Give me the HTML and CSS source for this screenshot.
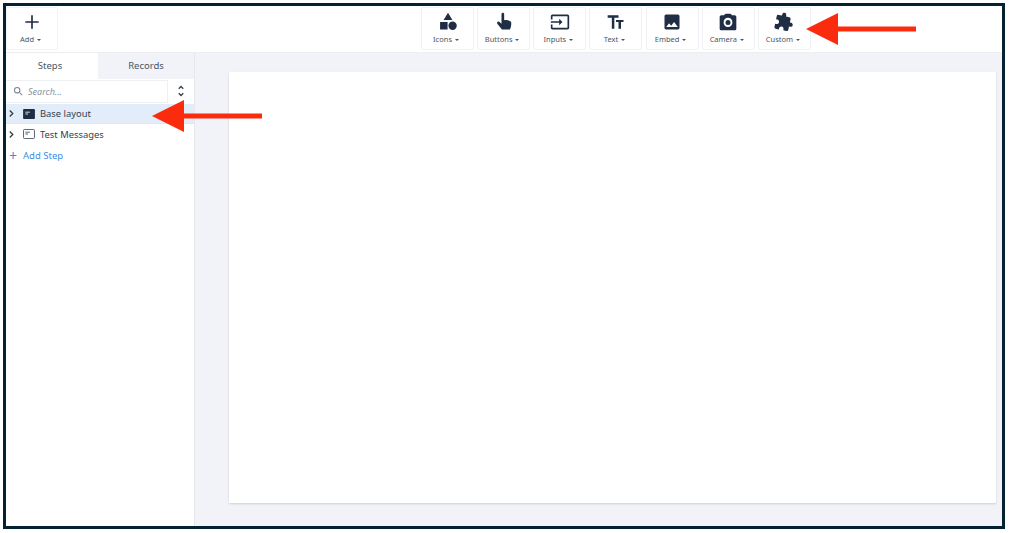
FILE: index.html
```html
<!DOCTYPE html>
<html lang="en">
<head>
    <meta charset="UTF-8">
    <meta name="viewport" content="width=device-width, initial-scale=1.0">
    <title>Steps editor</title>
    <link rel="stylesheet" href="styles.css">
</head>
<body>
    <div class="frame">
        <header class="toolbar">
            <div class="tool tool-add">
                <svg class="tool-icon" viewBox="0 0 24 24"><path d="M12 4v16M4 12h16" fill="none" stroke="#1f2d45" stroke-width="2"/></svg>
                <span class="tool-label">Add <i class="caret"></i></span>
            </div>
            <div class="tool-group">
                <div class="tool">
                    <svg class="tool-icon" viewBox="0 0 24 24"><path d="M12 1l5.300 8.500H6.700z"/><rect x="2.500" y="12" width="9" height="9"/><circle cx="17.500" cy="16.500" r="5"/></svg>
                    <span class="tool-label">Icons <i class="caret"></i></span>
                </div>
                <div class="tool">
                    <svg class="tool-icon" viewBox="0 0 24 24"><path d="M9 2.500c0-1 .7-1.700 1.600-1.700s1.600.7 1.600 1.700v7.300c2.500-.3 7.800.5 8.300 2.200.4 1.500.2 4.300-.4 6.300-.4 1.500-1 2.700-1 2.700H9.500L4.200 14.500c-.8-1.100-.6-2.100.2-2.700.8-.6 1.700-.4 2.500.4L9 14.200z"/></svg>
                    <span class="tool-label">Buttons <i class="caret"></i></span>
                </div>
                <div class="tool">
                    <svg class="tool-icon" viewBox="0 0 24 24"><path d="M21 3.010H3c-1.100 0-2 .9-2 2V9h2V4.990h18v14.030H3V15H1v4.010c0 1.100.9 1.980 2 1.980h18c1.100 0 2-.88 2-1.980v-14c0-1.110-.9-2-2-2zM11 16l4-4-4-4v3H1v2h10v3z"/></svg>
                    <span class="tool-label">Inputs <i class="caret"></i></span>
                </div>
                <div class="tool">
                    <svg class="tool-icon" viewBox="0 0 24 24"><path d="M2 4v3h5v13h3V7h5V4H2zM21 9.500h-9v2.500h3v8h3v-8h3z"/></svg>
                    <span class="tool-label">Text <i class="caret"></i></span>
                </div>
                <div class="tool">
                    <svg class="tool-icon" viewBox="0 0 24 24"><path d="M21 19V5c0-1.100-.9-2-2-2H5c-1.100 0-2 .9-2 2v14c0 1.100.9 2 2 2h14c1.100 0 2-.9 2-2zM8.500 13.500l2.500 3.010L14.500 12l4.500 6H5l3.500-4.500z"/></svg>
                    <span class="tool-label">Embed <i class="caret"></i></span>
                </div>
                <div class="tool">
                    <svg class="tool-icon" viewBox="0 0 24 24"><circle cx="12" cy="12.500" r="3"/><path d="M9 2L7.170 4H4c-1.100 0-2 .9-2 2v14c0 1.100.9 2 2 2h16c1.100 0 2-.9 2-2V6c0-1.100-.9-2-2-2h-3.170L15 2H9zm3 16c-3 0-5.300-2.400-5.300-5.500S9 7 12 7s5.300 2.400 5.300 5.500S15 18 12 18z"/></svg>
                    <span class="tool-label">Camera <i class="caret"></i></span>
                </div>
                <div class="tool">
                    <svg class="tool-icon" viewBox="0 0 24 24"><path transform="rotate(12 12 12)" d="M20.500 11H19V7c0-1.100-.9-2-2-2h-4V3.500C13 2.120 11.880 1 10.500 1S8 2.120 8 3.500V5H4c-1.100 0-1.990.9-1.990 2v3.800H3.500c1.490 0 2.700 1.210 2.700 2.700s-1.210 2.700-2.700 2.700H2V20c0 1.100.9 2 2 2h3.800v-1.500c0-1.490 1.210-2.700 2.700-2.700 1.490 0 2.700 1.210 2.700 2.700V22H17c1.100 0 2-.9 2-2v-4h1.500c1.380 0 2.500-1.120 2.500-2.500S21.880 11 20.500 11z"/></svg>
                    <span class="tool-label">Custom <i class="caret"></i></span>
                </div>
            </div>
        </header>

        <div class="main">
            <aside class="sidebar">
                <div class="tabs">
                    <div class="tab tab-active">Steps</div>
                    <div class="tab">Records</div>
                </div>
                <div class="search-row">
                    <div class="search">
                        <svg class="search-icon" viewBox="0 0 24 24"><circle cx="10" cy="10" r="6.500" fill="none" stroke="#7a8494" stroke-width="2.500"/><path d="M15 15l7 7" stroke="#7a8494" stroke-width="2.500"/></svg>
                        <span>Search...</span>
                    </div>
                    <svg class="sort-icon" viewBox="0 0 10 16"><path d="M2 5l3-3 3 3M2 11l3 3 3-3" fill="none" stroke="#333f50" stroke-width="1.800"/></svg>
                </div>
                <div class="step step-selected">
                    <svg class="chevron" viewBox="0 0 8 10"><path d="M2 1.500l3.500 3.500L2 8.500" fill="none" stroke="#333f50" stroke-width="1.500"/></svg>
                    <svg class="step-icon" viewBox="0 0 13 11"><rect width="13" height="11" rx="1" fill="#1f2d45"/><path d="M2.500 3.500h5M2.500 5.500h3" stroke="#dfe9f6"/></svg>
                    <span>Base layout</span>
                </div>
                <div class="step">
                    <svg class="chevron" viewBox="0 0 8 10"><path d="M2 1.500l3.500 3.500L2 8.500" fill="none" stroke="#333f50" stroke-width="1.500"/></svg>
                    <svg class="step-icon" viewBox="0 0 13 11"><rect x=".5" y=".5" width="12" height="10" rx="1" fill="none" stroke="#4a5565"/><path d="M2.500 3.500h5M2.500 5.500h3" stroke="#4a5565"/></svg>
                    <span>Test Messages</span>
                </div>
                <div class="add-step"><span class="add-plus">+</span> Add Step</div>
            </aside>
            <main class="canvas">
                <div class="page"></div>
            </main>
        </div>

        <svg class="arrow arrow-step" viewBox="0 0 110 32"><path d="M0 16L32 0v13.500h78v5H32V32z"/></svg>
        <svg class="arrow arrow-custom" viewBox="0 0 110 32"><path d="M0 16L32 0v13.500h78v5H32V32z"/></svg>
    </div>
</body>
</html>
```

FILE: styles.css
```css
* {
    box-sizing: border-box;
}
html, body {
    height: 100%;
}
body {
    margin: 0;
    background-color: #fff;
    font-family: "Noto Sans", "Open Sans", sans-serif;
    color: #333f50;
    overflow: hidden;
}
.frame {
    position: relative;
    width: 1002px;
    height: 526px;
    margin: 3px 0 0 3px;
    border: 3px solid #04222f;
    display: flex;
    flex-direction: column;
    background-color: #fff;
}
.toolbar {
    position: relative;
    height: 47px;
    padding-top: 1px;
    border-bottom: 1px solid #eceef2;
    flex-shrink: 0;
}
.tool-group {
    position: absolute;
    left: 415px;
    top: 1px;
    display: flex;
    gap: 3.170px;
}
.tool {
    width: 53px;
    height: 43px;
    border: 1px solid #f1f2f5;
    border-radius: 2px;
    display: flex;
    flex-direction: column;
    align-items: center;
    padding-top: 4px;
}
.tool-add {
    width: 52px;
}
.tool-icon {
    width: 20px;
    height: 20px;
    fill: #1f2d45;
}
.tool-label {
    font-size: 7.500px;
    line-height: 10px;
    margin-top: 2px;
    margin-right: 3px;
    color: #4a5565;
    white-space: nowrap;
}
.caret {
    display: inline-block;
    margin-left: 1px;
    vertical-align: 1px;
    border-left: 2.500px solid transparent;
    border-right: 2.500px solid transparent;
    border-top: 2.500px solid #4a5565;
}
.main {
    flex: 1;
    display: flex;
    min-height: 0;
}
.sidebar {
    width: 189px;
    flex-shrink: 0;
    border-right: 1px solid #e6e8ee;
}
.tabs {
    display: flex;
    height: 26px;
}
.tab {
    flex: 1;
    display: flex;
    align-items: center;
    justify-content: center;
    padding-bottom: 2px;
    font-size: 9.500px;
    background-color: #f2f3f8;
    color: #4a5565;
}
.tab-active {
    flex: 0 0 92px;
    padding-right: 4px;
    background-color: #fff;
}
.search-row {
    display: flex;
    align-items: center;
    height: 24px;
}
.search {
    width: 162px;
    height: 23px;
    border: 1px solid #eef0f3;
    border-left: none;
    display: flex;
    align-items: center;
    padding-left: 7px;
    font-size: 9px;
    font-style: italic;
    color: #8a93a0;
}
.search-icon {
    width: 10px;
    height: 10px;
    margin-right: 5px;
}
.sort-icon {
    width: 8px;
    height: 12px;
    margin-left: 9px;
}
.step {
    height: 20px;
    display: flex;
    align-items: center;
    font-size: 9.400px;
    color: #333f50;
}
.step-selected {
    margin-top: 1px;
    background-color: #e3edf9;
    border-bottom: 1px solid #dfe6f0;
}
.chevron {
    width: 7px;
    height: 9px;
    margin: 0 8px 0 2px;
}
.step-icon {
    width: 12px;
    height: 10px;
    margin-right: 5px;
}
.add-step {
    margin: 1px 0 0 3px;
    height: 20px;
    display: flex;
    align-items: center;
    font-size: 9.500px;
    color: #3b8fe8;
}
.add-plus {
    font-size: 14px;
    margin-right: 6px;
}
.canvas {
    flex: 1;
    background-color: #f2f3f8;
    padding: 19px 6px 0 34px;
}
.page {
    height: 431px;
    background-color: #fff;
    box-shadow: 0 1px 2px rgba(0, 0, 0, 0.15);
}
.arrow {
    position: absolute;
    width: 110px;
    height: 32px;
    fill: #fb2b0e;
}
.arrow-step {
    left: 146px;
    top: 94px;
}
.arrow-custom {
    left: 800px;
    top: 7px;
}
```
